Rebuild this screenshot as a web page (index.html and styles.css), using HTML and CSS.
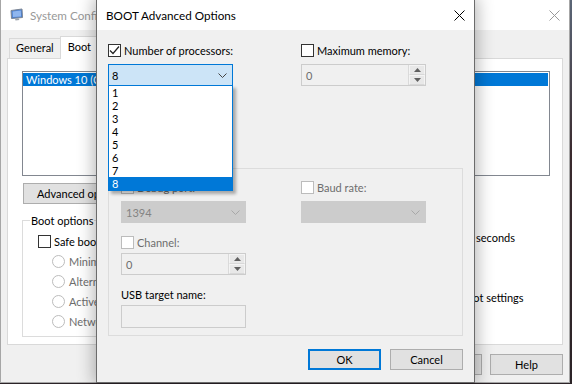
FILE: index.html
```html
<!DOCTYPE html>
<html lang="en">
<head>
    <meta charset="UTF-8">
    <title>BOOT Advanced Options</title>
    <link rel="stylesheet" href="styles.css">
</head>
<body>
    <div class="desktop">
        <!-- background window -->
        <div class="window sysconfig">
            <div class="titlebar">
                <svg class="app-icon" width="14" height="14" viewBox="0 0 14 14">
                    <path d="M1 2.5 L12 1 L12.5 9.5 L1.5 10.5 Z" fill="#4a7fd0" stroke="#7d8694" stroke-width="1"/>
                    <path d="M2.6 3.6 L10.8 2.6 L11.1 8.4 L2.9 9.1 Z" fill="#8fb6ef"/>
                    <path d="M5 10.5 L5.5 12.5 L9.5 12 L8.5 10.2" fill="#9aa1ab"/>
                </svg>
                <span class="title">System Configuration</span>
                <svg class="close" width="11" height="11" viewBox="0 0 11 11">
                    <path d="M0.5 0.5 L10.5 10.5 M10.5 0.5 L0.5 10.5" stroke="#999" stroke-width="1"/>
                </svg>
            </div>
            <div class="sys-body">
                <div class="tabs">
                    <span class="tab">General</span>
                    <span class="tab active">Boot</span>
                    <span class="tab">Services</span>
                    <span class="tab">Startup</span>
                    <span class="tab">Tools</span>
                </div>
                <div class="tab-page">
                    <div class="os-list">
                        <div class="os-item selected">Windows 10 (C:\WINDOWS) : Current OS; Default OS</div>
                    </div>
                    <div class="list-actions">
                        <span class="btn wide">Advanced options...</span>
                        <span class="btn wide">Set as default</span>
                        <span class="btn">Delete</span>
                    </div>
                    <div class="boot-row">
                        <div class="group boot-options">
                            <span class="group-label light">Boot options</span>
                            <label class="check"><span class="box"></span>Safe boot</label>
                            <div class="radios">
                                <label class="radio"><span class="dot"></span>Minimal</label>
                                <label class="radio"><span class="dot"></span>Alternate shell</label>
                                <label class="radio"><span class="dot"></span>Active Directory repair</label>
                                <label class="radio"><span class="dot"></span>Network</label>
                            </div>
                        </div>
                        <div class="boot-side">
                            <div class="timeout">
                                <span class="timeout-label">Timeout:</span>
                                <span class="input">30</span>
                                <span>seconds</span>
                            </div>
                            <label class="check permanent"><span class="box"></span><span>Make all boot settings<br>permanent</span></label>
                        </div>
                    </div>
                </div>
                <div class="footer">
                    <span class="btn">OK</span>
                    <span class="btn">Cancel</span>
                    <span class="btn">Apply</span>
                    <span class="btn">Help</span>
                </div>
            </div>
        </div>

        <!-- advanced options dialog -->
        <div class="window dialog">
            <div class="titlebar">
                <span class="title">BOOT Advanced Options</span>
                <svg class="close" width="11" height="11" viewBox="0 0 11 11">
                    <path d="M0.5 0.5 L10.5 10.5 M10.5 0.5 L0.5 10.5" stroke="#000" stroke-width="1"/>
                </svg>
            </div>
            <div class="dialog-body">
                <div class="columns">
                    <div class="field">
                        <label class="check">
                            <span class="box">
                                <svg width="11" height="11" viewBox="0 0 11 11"><path d="M1 5.5 L4 8.5 L10 1.5" fill="none" stroke="#222" stroke-width="1.2"/></svg>
                            </span>
                            Number of processors:
                        </label>
                        <div class="combo open">
                            <span>8</span>
                            <svg class="chevron" width="9" height="5" viewBox="0 0 9 5"><path d="M0.5 0.5 L4.5 4.5 L8.5 0.5" fill="none" stroke="#444" stroke-width="1"/></svg>
                            <ul class="dropdown">
                                <li>1</li>
                                <li>2</li>
                                <li>3</li>
                                <li>4</li>
                                <li>5</li>
                                <li>6</li>
                                <li>7</li>
                                <li class="selected">8</li>
                            </ul>
                        </div>
                    </div>
                    <div class="field">
                        <label class="check"><span class="box"></span>Maximum memory:</label>
                        <div class="spin">
                            <span>0</span>
                            <span class="spin-buttons">
                                <span class="spin-btn"><svg width="7" height="4" viewBox="0 0 7 4"><path d="M0 4 L3.5 0 L7 4 Z" fill="#606060"/></svg></span>
                                <span class="spin-btn"><svg width="7" height="4" viewBox="0 0 7 4"><path d="M0 0 L3.5 4 L7 0 Z" fill="#606060"/></svg></span>
                            </span>
                        </div>
                    </div>
                </div>

                <div class="group debug">
                    <span class="group-label">Debug settings</span>
                    <div class="field">
                        <label class="check disabled"><span class="box"></span>Debug port:</label>
                        <div class="combo disabled">
                            <span>1394</span>
                            <svg class="chevron" width="9" height="5" viewBox="0 0 9 5"><path d="M0.5 0.5 L4.5 4.5 L8.5 0.5" fill="none" stroke="#a8a8a8" stroke-width="1"/></svg>
                        </div>
                    </div>
                    <div class="field">
                        <label class="check disabled"><span class="box"></span>Baud rate:</label>
                        <div class="combo disabled">
                            <span></span>
                            <svg class="chevron" width="9" height="5" viewBox="0 0 9 5"><path d="M0.5 0.5 L4.5 4.5 L8.5 0.5" fill="none" stroke="#a8a8a8" stroke-width="1"/></svg>
                        </div>
                    </div>
                    <div class="field tight first-col">
                        <label class="check disabled"><span class="box"></span>Channel:</label>
                        <div class="spin">
                            <span>0</span>
                            <span class="spin-buttons">
                                <span class="spin-btn"><svg width="7" height="4" viewBox="0 0 7 4"><path d="M0 4 L3.5 0 L7 4 Z" fill="#606060"/></svg></span>
                                <span class="spin-btn"><svg width="7" height="4" viewBox="0 0 7 4"><path d="M0 0 L3.5 4 L7 0 Z" fill="#606060"/></svg></span>
                            </span>
                        </div>
                    </div>
                    <div class="field tight first-col">
                        <span class="field-label">USB target name:</span>
                        <div class="textbox"></div>
                    </div>
                </div>

                <div class="buttons">
                    <span class="btn default">OK</span>
                    <span class="btn">Cancel</span>
                </div>
            </div>
        </div>
    </div>
</body>
</html>
```

FILE: styles.css
```css
* {
    box-sizing: border-box;
}
body {
    margin: 0;
    width: 572px;
    height: 384px;
    overflow: hidden;
    font-family: Lato, "Open Sans", sans-serif;
    font-size: 11px;
    color: #000;
    background: linear-gradient(#5b6677, #3a2a2e 40%, #2b2327);
}
.desktop {
    position: relative;
    width: 572px;
    height: 384px;
}
.window {
    position: absolute;
    background-color: #f0f0f0;
}
.titlebar {
    display: flex;
    align-items: center;
    height: 30px;
    background-color: white;
    padding: 0 9px;
}
.titlebar .close {
    margin-left: auto;
}
.title {
    font-size: 11.7px;
}

/* System Configuration (behind) */
.sysconfig {
    left: 0;
    top: -1px;
    width: 570px;
    height: 384px;
    border: 1px solid #a6a6a6;
}
.sysconfig .title {
    margin-left: 6px;
    color: #999;
}
.sys-body {
    padding: 0 6px;
}
.tabs {
    display: flex;
    align-items: flex-end;
    height: 28px;
    padding-left: 2px;
}
.tab {
    height: 20px;
    line-height: 18px;
    padding: 0 6px;
    border: 1px solid #d9d9d9;
    border-bottom: 0;
    margin-right: -1px;
}
.tab.active {
    height: 23px;
    line-height: 20px;
    padding: 0 7px;
    margin-bottom: -1px;
    background-color: white;
    position: relative;
    z-index: 1;
}
.tab-page {
    height: 287px;
    background-color: white;
    border: 1px solid #d9d9d9;
    padding: 12px 12px 0 14px;
}
.os-list {
    height: 105px;
    border: 1px solid #828790;
    padding: 1px 1px 0 0;
}
.os-item {
    height: 13px;
    line-height: 13px;
    padding-left: 3px;
    white-space: nowrap;
}
.os-item.selected {
    background-color: #0078d7;
    color: white;
}
.list-actions {
    display: flex;
    gap: 8px;
    margin-top: 7px;
    padding-left: 1px;
}
.btn {
    display: flex;
    align-items: center;
    justify-content: center;
    width: 73px;
    height: 21px;
    background-color: #e1e1e1;
    border: 1px solid #adadad;
    white-space: nowrap;
}
.btn.wide {
    width: auto;
    padding: 0 13px;
}
.btn.default {
    border: 2px solid #0078d7;
}
.boot-row {
    display: flex;
    align-items: flex-start;
    margin-top: 16px;
}
.group {
    position: relative;
    border: 1px solid #dcdcdc;
}
.group-label {
    position: absolute;
    top: -8px;
    left: 7px;
    padding: 0 1px;
    line-height: 15px;
    background-color: #f0f0f0;
}
.group-label.light {
    background-color: white;
}
.boot-options {
    flex: none;
    width: 300px;
    padding: 14px 0 8px 15px;
}
.radios {
    display: flex;
    flex-direction: column;
    gap: 7px;
    margin: 7px 0 0 14px;
}
.radio {
    display: flex;
    align-items: center;
    gap: 4px;
    height: 13px;
    color: #6d6d6d;
}
.dot {
    width: 13px;
    height: 13px;
    border: 1px solid #bcbcbc;
    border-radius: 50%;
    background-color: white;
}
.boot-side {
    flex: none;
    width: 210px;
    margin-left: 10px;
}
.timeout {
    display: flex;
    align-items: center;
    gap: 4px;
    height: 20px;
    margin: 7px 0 0 56px;
}
.timeout > * {
    flex: none;
}
.timeout-label {
    width: 44px;
}
.input {
    width: 36px;
    height: 20px;
    border: 1px solid #7a7a7a;
    padding-left: 3px;
    line-height: 18px;
}
.check.permanent {
    align-items: flex-start;
    height: auto;
    line-height: 14px;
    margin: 44px 0 0 70px;
}
.footer {
    display: flex;
    justify-content: flex-end;
    gap: 8px;
    margin-top: 9px;
}

/* Advanced options dialog */
.dialog {
    left: 96px;
    top: -1px;
    width: 379px;
    height: 384px;
    border: 1px solid #6b6b6b;
    box-shadow: 0 0 16px 2px rgba(0, 0, 0, 0.3);
    z-index: 2;
}
.dialog-body {
    padding: 14px 11px 0 11px;
}
.columns {
    display: grid;
    grid-template-columns: 125px 125px;
    column-gap: 68px;
}
.field {
    display: flex;
    flex-direction: column;
    gap: 7px;
}
.field.tight {
    gap: 4px;
}
.check {
    display: flex;
    align-items: center;
    gap: 3px;
    height: 13px;
    white-space: nowrap;
}
.box {
    flex: none;
    display: flex;
    align-items: center;
    justify-content: center;
    width: 13px;
    height: 13px;
    border: 1px solid #333;
    background-color: white;
}
.check.disabled {
    color: #6d6d6d;
}
.check.disabled .box {
    border-color: #bcbcbc;
}
.combo {
    position: relative;
    display: flex;
    align-items: center;
    justify-content: space-between;
    height: 22px;
    padding: 0 5px 0 3px;
    border: 1px solid #0078d7;
    background-color: #cce4f7;
}
.combo.disabled {
    border-color: #cccccc;
    background-color: #cccccc;
    color: #838383;
    padding-left: 4px;
}
.dropdown {
    position: absolute;
    top: 20px;
    left: -1px;
    width: 125px;
    margin: 0;
    padding: 0;
    list-style: none;
    background-color: white;
    border: 1px solid #0078d7;
    box-shadow: 3px 3px 3px rgba(0, 0, 0, 0.3);
    z-index: 5;
}
.dropdown li {
    height: 13px;
    line-height: 13px;
    padding-left: 3px;
}
.dropdown li.selected {
    background-color: #0078d7;
    color: white;
}
.spin {
    display: flex;
    align-items: center;
    justify-content: space-between;
    height: 22px;
    padding-left: 4px;
    border: 1px solid #cccccc;
    color: #6d6d6d;
}
.spin-buttons {
    display: flex;
    flex-direction: column;
    width: 17px;
    height: 20px;
    border-left: 1px solid #dadada;
}
.spin-btn {
    flex: 1;
    display: flex;
    align-items: center;
    justify-content: center;
    background-color: #e8e8e8;
    border: 1px solid #f4f4f4;
    border-bottom-color: #d8d8d8;
}
.debug {
    display: grid;
    grid-template-columns: 125px 125px;
    column-gap: 55px;
    row-gap: 13px;
    margin-top: 82px;
    padding: 12px 0 7px 12px;
}
.first-col {
    grid-column: 1;
}
.field-label {
    line-height: 13px;
}
.textbox {
    height: 23px;
    border: 1px solid #cccccc;
}
.buttons {
    display: flex;
    justify-content: flex-end;
    gap: 9px;
    margin-top: 13px;
}
```
